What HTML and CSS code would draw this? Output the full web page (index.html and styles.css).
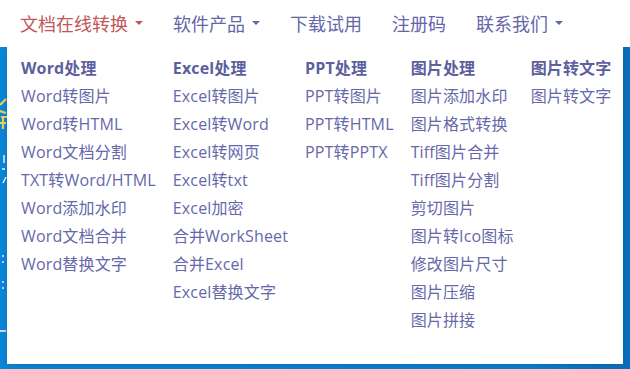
FILE: index.html
```html
<!DOCTYPE html>
<html lang="zh-CN">
<head>
  <meta charset="UTF-8">
  <title>文档在线转换</title>
  <link rel="stylesheet" href="styles.css">
</head>
<body>

  <header class="navbar">
    <ul class="nav">
      <li class="nav-item active">文档在线转换 <span class="caret"></span></li>
      <li class="nav-item">软件产品 <span class="caret"></span></li>
      <li class="nav-item">下载试用</li>
      <li class="nav-item">注册码</li>
      <li class="nav-item">联系我们 <span class="caret"></span></li>
    </ul>
  </header>

  <div class="banner">
    <svg class="banner-art" width="8" height="322" viewBox="0 0 8 322">
      <path d="M0 58 L6 52 M0 64 L6 66 M1 70 H7 M3 70 V82 M0 76 H6" stroke="#f4d54c" stroke-width="2.2" fill="none"/>
      <path d="M4 108 V116 M2 122 H5 M6 130 L3 136 M3 208 V210 M3 214 V216 M3 234 V236 M3 240 V242 M0 284 H6" stroke="#ffffff" stroke-width="1.4" fill="none"/>
    </svg>

    <div class="dropdown">
      <ul class="menu-col">
        <li class="menu-head">Word处理</li>
        <li>Word转图片</li>
        <li>Word转HTML</li>
        <li>Word文档分割</li>
        <li>TXT转Word/HTML</li>
        <li>Word添加水印</li>
        <li>Word文档合并</li>
        <li>Word替换文字</li>
      </ul>
      <ul class="menu-col">
        <li class="menu-head">Excel处理</li>
        <li>Excel转图片</li>
        <li>Excel转Word</li>
        <li>Excel转网页</li>
        <li>Excel转txt</li>
        <li>Excel加密</li>
        <li>合并WorkSheet</li>
        <li>合并Excel</li>
        <li>Excel替换文字</li>
      </ul>
      <ul class="menu-col">
        <li class="menu-head">PPT处理</li>
        <li>PPT转图片</li>
        <li>PPT转HTML</li>
        <li>PPT转PPTX</li>
      </ul>
      <ul class="menu-col">
        <li class="menu-head">图片处理</li>
        <li>图片添加水印</li>
        <li>图片格式转换</li>
        <li>Tiff图片合并</li>
        <li>Tiff图片分割</li>
        <li>剪切图片</li>
        <li>图片转Ico图标</li>
        <li>修改图片尺寸</li>
        <li>图片压缩</li>
        <li>图片拼接</li>
      </ul>
      <ul class="menu-col">
        <li class="menu-head">图片转文字</li>
        <li>图片转文字</li>
      </ul>
    </div>
  </div>

</body>
</html>
```

FILE: styles.css
```css
body {
  margin: 0;
  font-family: "Open Sans", "Noto Sans CJK SC", sans-serif;
  background: #0b82d6;
  overflow: hidden;
}

ul {
  list-style: none;
  margin: 0;
  padding: 0;
}

.navbar {
  background: white;
  height: 47px;
  display: flex;
  align-items: center;
}

.nav {
  display: flex;
  margin-left: 5px;
}

.nav-item {
  padding: 0 15px;
  font-size: 18px;
  color: #6466a8;
  line-height: 24px;
  display: flex;
  align-items: center;
  gap: 5px;
  font-family: "Noto Sans CJK SC", sans-serif;
  margin-top: -1px;
}

.nav-item.active {
  color: #c0575a;
}

.caret {
  display: inline-block;
  width: 0;
  height: 0;
  border-top: 4px solid;
  border-left: 4px solid transparent;
  border-right: 4px solid transparent;
  margin-left: 2px;
}

.banner {
  position: relative;
  height: 322px;
  background: linear-gradient(90deg, #0a88dc, #0a7fd2 85%, #0a6fbf);
  overflow: hidden;
}

.banner-art {
  display: block;
}

.dropdown {
  position: absolute;
  top: 0;
  left: 7px;
  width: 616px;
  height: 317px;
  box-sizing: border-box;
  background: white;
  padding: 7px 0 0 14px;
  display: flex;
  gap: 17px;
  box-shadow: 0 1px 8px rgba(0, 0, 0, 0.18);
}

.menu-col li {
  font-size: 16px;
  line-height: 28px;
  color: #6668aa;
  white-space: nowrap;
  letter-spacing: 0.15px;
}

.menu-col .menu-head {
  font-weight: bold;
  color: #5d5f9f;
}
```
